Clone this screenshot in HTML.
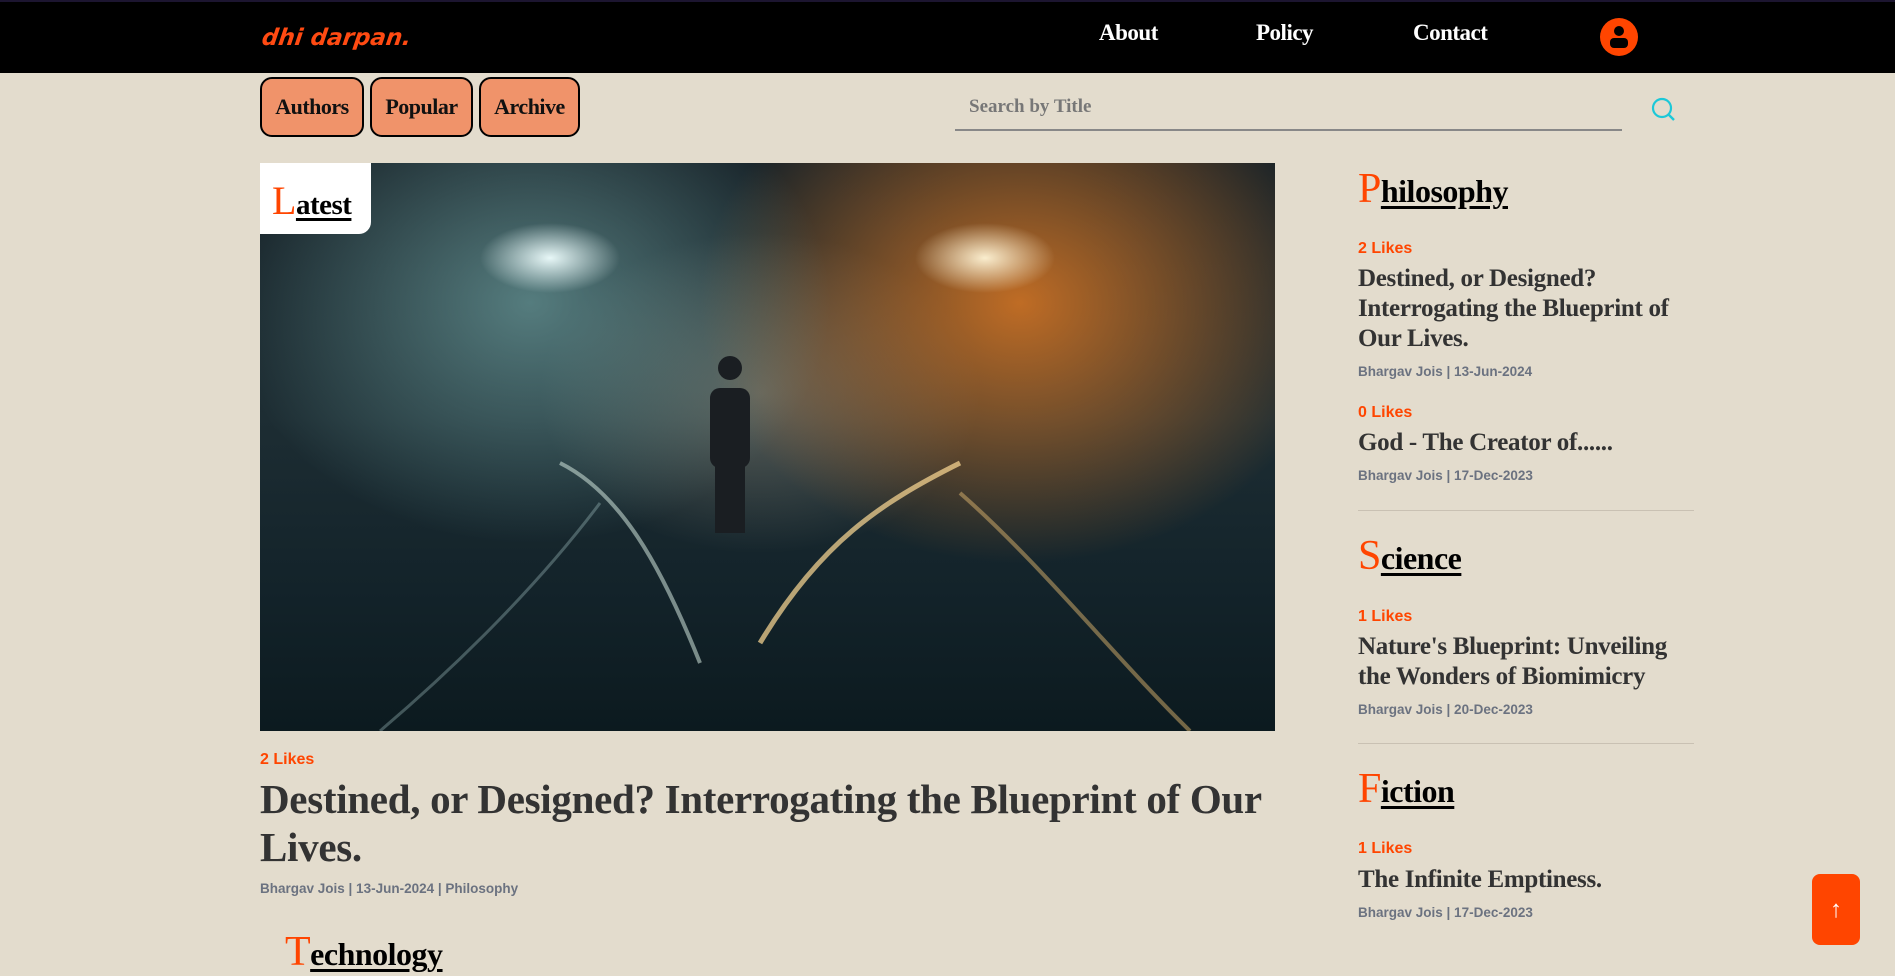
<!DOCTYPE html>
<html><head><meta charset="utf-8"><style>
*{margin:0;padding:0;box-sizing:border-box}
body{width:1895px;height:965px;overflow:hidden;background:#e3dccd;position:relative;font-family:"Liberation Serif",serif}
.a{position:absolute;white-space:nowrap}
.nav{position:absolute;left:0;top:0;width:1895px;height:73px;background:#000;border-top:2px solid #1c1530}
.logo{left:262px;top:25px;color:#ff4a12;font:italic 700 23px "DejaVu Sans",sans-serif;letter-spacing:0px;transform:skewX(-8deg)}
.nl{top:20px;color:#fff;font:700 23px "Liberation Serif",serif;letter-spacing:-0.5px}
.btn{top:77px;height:60px;background:#f0936a;border:2px solid #000;border-radius:12px;font:700 22px "Liberation Serif",serif;letter-spacing:-0.5px;display:flex;align-items:center;justify-content:center;color:#111}
.sans{font-family:"Liberation Sans",sans-serif;font-weight:700}
.lk{color:#ff4500;font-size:16px}
.meta{color:#6b7280;font-size:13.5px}
.st{color:#333;font:700 25px/30px "Liberation Serif",serif;letter-spacing:-0.3px}
.h{font:700 32px "Liberation Serif",serif;color:#000;letter-spacing:-0.5px}
.h b{color:#ff4500;font-size:42px;font-weight:400}
.h span{text-decoration:underline;text-decoration-thickness:3px;text-underline-offset:4px}
.hr{left:1358px;width:336px;height:1px;background:#c9c1b3}
</style></head><body>
<div class="nav"></div>
<div class="a logo">dhi darpan.</div>
<div class="a nl" style="left:1099px">About</div>
<div class="a nl" style="left:1256px">Policy</div>
<div class="a nl" style="left:1413px">Contact</div>
<svg class="a" style="left:1600px;top:18px" width="38" height="38" viewBox="0 0 38 38"><circle cx="19" cy="19" r="19" fill="#ff4500"/><circle cx="19" cy="13" r="5" fill="#000"/><rect x="10" y="20" width="18" height="10" rx="4" fill="#000"/></svg>

<div class="a btn" style="left:260px;width:104px">Authors</div>
<div class="a btn" style="left:370px;width:103px">Popular</div>
<div class="a btn" style="left:479px;width:101px">Archive</div>

<div class="a" style="left:969px;top:96px;color:#777;font:700 19px 'Liberation Serif',serif">Search by Title</div>
<div class="a" style="left:955px;top:129px;width:667px;height:2px;background:#888"></div>
<svg class="a" style="left:1650px;top:96px" width="28" height="28" viewBox="0 0 28 28"><circle cx="12" cy="12" r="9" fill="none" stroke="#1cc8d8" stroke-width="2.2"/><line x1="18.5" y1="18.5" x2="24" y2="24" stroke="#1cc8d8" stroke-width="2.4"/></svg>

<div class="a" style="left:260px;top:163px;width:1015px;height:568px;overflow:hidden;background:
radial-gradient(ellipse 70px 35px at 290px 95px,rgba(240,255,255,.95),rgba(0,0,0,0) 100%),
radial-gradient(ellipse 70px 35px at 725px 95px,rgba(255,245,215,.95),rgba(0,0,0,0) 100%),
radial-gradient(ellipse 300px 240px at 270px 140px,rgba(110,160,160,.7),rgba(0,0,0,0) 100%),
radial-gradient(ellipse 320px 260px at 760px 140px,rgba(220,120,35,.85),rgba(0,0,0,0) 100%),
radial-gradient(ellipse 220px 160px at 500px 230px,rgba(170,160,140,.45),rgba(0,0,0,0) 100%),
linear-gradient(180deg,#172228 0%,#1d2d33 45%,#13232a 75%,#0c1a1f 100%)">
<svg style="position:absolute;left:0;top:0" width="1015" height="568" viewBox="0 0 1015 568">
<path d="M440 500 C 400 400, 360 330, 300 300" stroke="rgba(210,230,220,.55)" stroke-width="4" fill="none"/>
<path d="M500 480 C 560 380, 620 340, 700 300" stroke="rgba(255,220,150,.7)" stroke-width="5" fill="none"/>
<path d="M700 330 C 780 400, 860 500, 930 568" stroke="rgba(220,180,110,.5)" stroke-width="4" fill="none"/>
<path d="M340 340 C 280 420, 200 500, 120 568" stroke="rgba(170,200,200,.35)" stroke-width="3" fill="none"/>
<rect x="450" y="225" width="40" height="80" rx="10" fill="#1a1e22"/>
<rect x="455" y="300" width="30" height="70" fill="#1a1e22"/>
<circle cx="470" cy="205" r="12" fill="#1a1e22"/>
</svg>
<div style="position:absolute;left:0;top:0;width:111px;height:71px;background:#fff;border-bottom-right-radius:12px"></div>
<div class="a h" style="left:12px;top:14px;font-size:29px"><b style="font-size:40px">L</b><span>atest</span></div>
</div>

<div class="a sans lk" style="left:260px;top:751px">2 Likes</div>
<div class="a" style="left:260px;top:775px;color:#333;font:700 41px/48px 'Liberation Serif',serif;letter-spacing:-0.3px;white-space:normal;width:1030px">Destined, or Designed? Interrogating the Blueprint of Our Lives.</div>
<div class="a sans meta" style="left:260px;top:881px">Bhargav Jois | 13-Jun-2024 | Philosophy</div>
<div class="a h" style="left:285px;top:928px"><b>T</b><span>echnology</span></div>

<div class="a h" style="left:1358px;top:165px"><b>P</b><span>hilosophy</span></div>
<div class="a sans lk" style="left:1358px;top:240px">2 Likes</div>
<div class="a st" style="left:1358px;top:264px;white-space:normal;width:345px">Destined, or Designed? Interrogating the Blueprint of Our Lives.</div>
<div class="a sans meta" style="left:1358px;top:364px">Bhargav Jois | 13-Jun-2024</div>
<div class="a sans lk" style="left:1358px;top:404px">0 Likes</div>
<div class="a st" style="left:1358px;top:428px">God - The Creator of......</div>
<div class="a sans meta" style="left:1358px;top:468px">Bhargav Jois | 17-Dec-2023</div>
<div class="a hr" style="top:510px"></div>

<div class="a h" style="left:1358px;top:532px"><b>S</b><span>cience</span></div>
<div class="a sans lk" style="left:1358px;top:608px">1 Likes</div>
<div class="a st" style="left:1358px;top:632px;white-space:normal;width:330px">Nature's Blueprint: Unveiling the Wonders of Biomimicry</div>
<div class="a sans meta" style="left:1358px;top:702px">Bhargav Jois | 20-Dec-2023</div>
<div class="a hr" style="top:743px"></div>

<div class="a h" style="left:1358px;top:765px"><b>F</b><span>iction</span></div>
<div class="a sans lk" style="left:1358px;top:840px">1 Likes</div>
<div class="a st" style="left:1358px;top:865px">The Infinite Emptiness.</div>
<div class="a sans meta" style="left:1358px;top:905px">Bhargav Jois | 17-Dec-2023</div>

<div class="a" style="left:1812px;top:874px;width:48px;height:71px;background:#ff4500;border-radius:8px;color:#fff;font:700 24px 'Liberation Sans',sans-serif;display:flex;align-items:center;justify-content:center">↑</div>
</body></html>
